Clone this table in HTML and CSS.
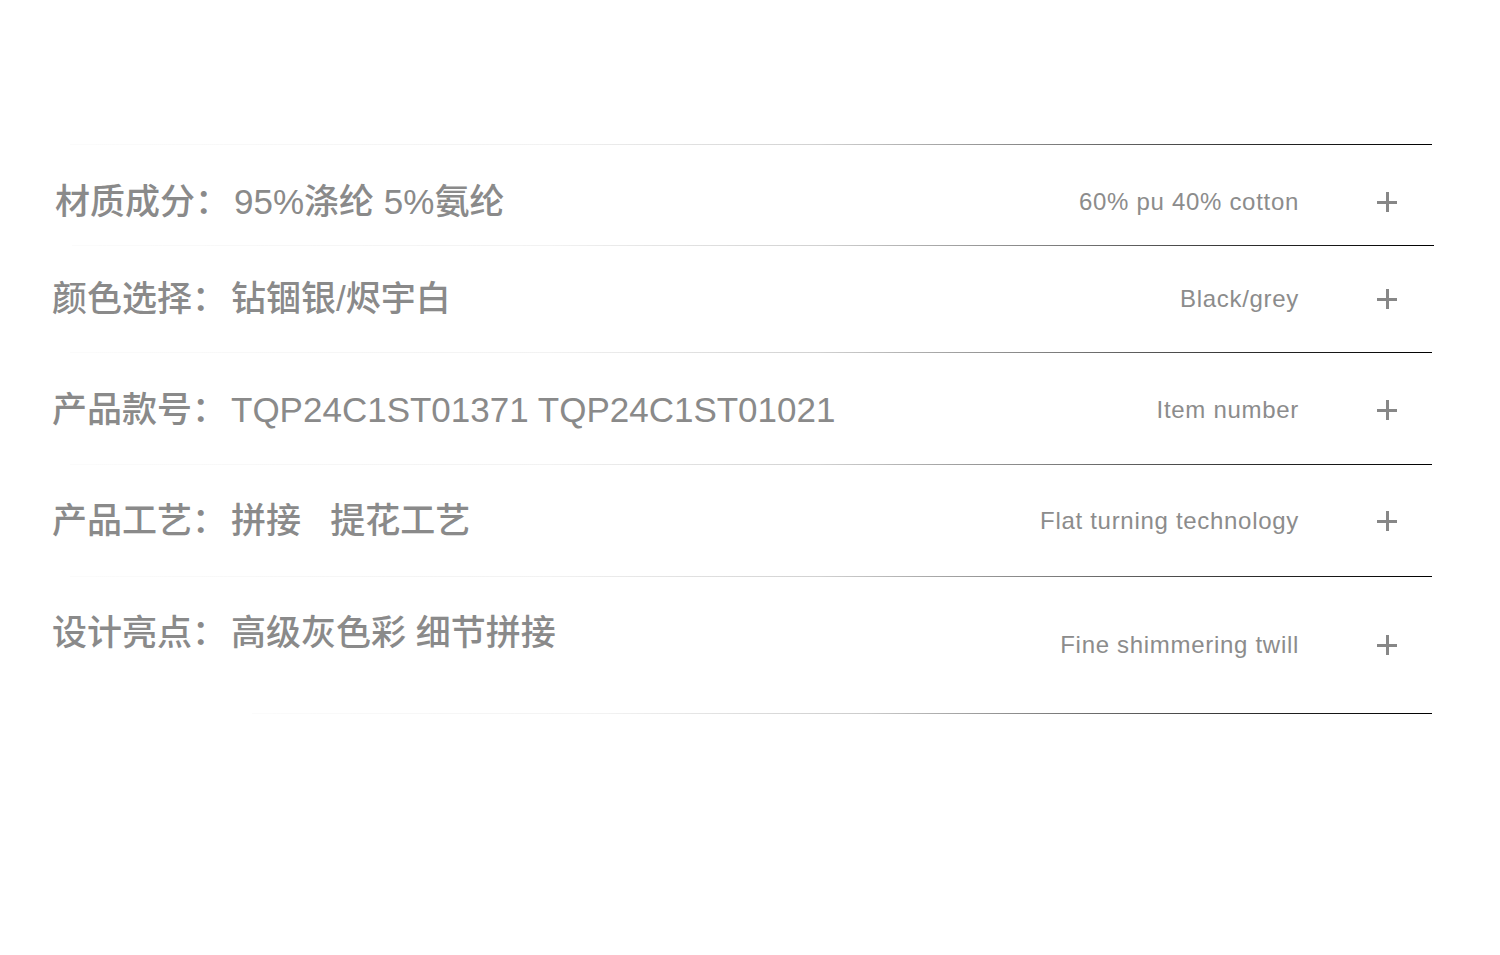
FILE: index.html
```html
<!DOCTYPE html>
<html lang="zh-CN">
<head>
<meta charset="utf-8">
<title>产品参数</title>
<link rel="stylesheet" href="styles.css">
</head>
<body>
<main class="specs">
  <div class="rule rule-a"></div>
  <div class="row row-1">
    <div class="label label-shift"><span class="key">材质成分：</span><span class="val">95%涤纶 5%氨纶</span></div>
    <div class="en">60% pu 40% cotton</div>
    <span class="plus"></span>
  </div>
  <div class="rule rule-b"></div>
  <div class="row row-2">
    <div class="label"><span class="key">颜色选择：</span><span class="val">钻锢银/烬宇白</span></div>
    <div class="en">Black/grey</div>
    <span class="plus"></span>
  </div>
  <div class="rule rule-a"></div>
  <div class="row row-3">
    <div class="label"><span class="key">产品款号：</span><span class="val">TQP24C1ST01371 TQP24C1ST01021</span></div>
    <div class="en">Item number</div>
    <span class="plus"></span>
  </div>
  <div class="rule rule-a"></div>
  <div class="row row-4">
    <div class="label"><span class="key">产品工艺：</span><span class="val">拼接&nbsp;&nbsp;&nbsp;提花工艺</span></div>
    <div class="en">Flat turning technology</div>
    <span class="plus"></span>
  </div>
  <div class="rule rule-a"></div>
  <div class="row row-5">
    <div class="label label-top"><span class="key">设计亮点：</span><span class="val">高级灰色彩 细节拼接</span></div>
    <div class="en">Fine shimmering twill</div>
    <span class="plus"></span>
  </div>
  <div class="rule rule-c"></div>
</main>
</body>
</html>
```

FILE: styles.css
```css
html, body {
  margin: 0;
  padding: 0;
  background: #ffffff;
}

body {
  width: 1500px;
  height: 955px;
  overflow: hidden;
}

.specs {
  padding-top: 144px;
  padding-left: 52px;
  width: 1380px;
}

.rule {
  height: 1px;
  background: linear-gradient(to right,
    rgba(0, 0, 0, 0.015) 0%,
    rgba(0, 0, 0, 0.05) 35%,
    rgba(0, 0, 0, 0.18) 55%,
    rgba(0, 0, 0, 0.5) 72%,
    rgba(0, 0, 0, 0.85) 88%,
    #000 100%);
}

.rule-a {
  margin-left: 18px;
}

.rule-b {
  margin-left: 20px;
  margin-right: -2px;
}

.rule-c {
  margin-left: 200px;
  background: linear-gradient(to right,
    rgba(0, 0, 0, 0.015) 0%,
    rgba(0, 0, 0, 0.05) 30%,
    rgba(0, 0, 0, 0.2) 52%,
    rgba(0, 0, 0, 0.55) 70%,
    rgba(0, 0, 0, 0.88) 88%,
    #000 100%);
}

.row {
  display: flex;
  align-items: center;
  box-sizing: border-box;
}

.row-1 { height: 100px; padding-top: 14px; }
.row-2 { height: 106px; }
.row-3 { height: 111px; padding-top: 3px; }
.row-4 { height: 111px; }
.row-5 { height: 136px; }

.label {
  flex: 1;
  font-family: "Liberation Sans", "Noto Sans CJK SC", sans-serif;
  font-size: 35px;
  line-height: 36px;
  font-weight: 500;
  color: #8a8a8a;
  white-space: nowrap;
}

.val {
  padding-left: 4px;
}

.label-shift {
  padding-left: 3px;
}

.label-top {
  align-self: flex-start;
  margin-top: 38px;
}

.en {
  font-family: "Liberation Sans", Arial, sans-serif;
  font-size: 24px;
  letter-spacing: 0.7px;
  line-height: 28px;
  color: #8c8c8c;
  margin-right: 78px;
  white-space: nowrap;
}

.plus {
  position: relative;
  width: 20px;
  height: 20px;
  margin-right: 35px;
  flex: none;
}

.plus::before,
.plus::after {
  content: "";
  position: absolute;
  background: #878787;
}

.plus::before {
  left: 0;
  top: 9px;
  width: 20px;
  height: 3px;
}

.plus::after {
  left: 9px;
  top: 0;
  width: 3px;
  height: 20px;
}
```
